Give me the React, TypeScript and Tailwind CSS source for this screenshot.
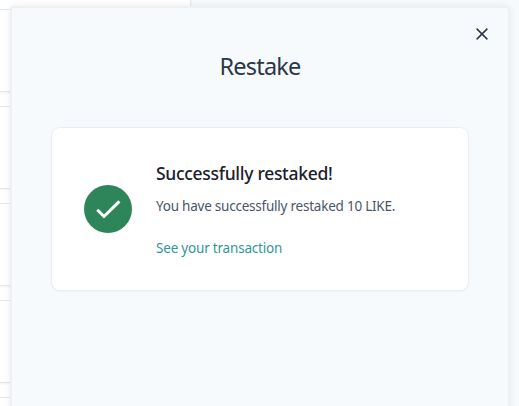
import React from "react";

function Backdrop() {
  return (
    <div className="h-[406px] w-[191px] border-r border-[#e2e8f0] bg-white pt-[9px] shadow-[1px_0_2px_rgba(0,0,0,0.03)]">
      {[0, 1, 2, 3, 4].map((i) => (
        <div key={i} className="mb-[14px] h-[83px] w-10 border-y border-[#e2e8f0] shadow-[0_1px_2px_rgba(0,0,0,0.05)]" />
      ))}
    </div>
  );
}

function SuccessCard() {
  return (
    <section className="flex h-[162px] items-center rounded-lg bg-white pl-8 shadow-[0_0_0_1px_#e8eef5,0_1px_3px_rgba(0,0,0,0.06)]">
      <svg className="size-12 shrink-0" viewBox="0 0 48 48">
        <circle cx="24" cy="24" r="24" fill="#2f855a" />
        <path d="M13.2 24.7l6.8 6.8L35.4 16.4" fill="none" stroke="white" strokeWidth="3" />
      </svg>
      <div className="ml-6 pt-px whitespace-nowrap">
        <h2 className="w-fit text-[17.5px] leading-6 font-medium tracking-[-0.3px] text-[#1a202c]">Successfully restaked!</h2>
        <p className="mt-[11px] w-fit text-[13.5px] leading-5 tracking-[-0.23px] text-[#4a5568]">You have successfully restaked 10 LIKE.</p>
        <a className="mt-[22px] block w-fit text-[13.5px] leading-5 tracking-[-0.2px] text-[#319795]">See your transaction</a>
      </div>
    </section>
  );
}

export default function App() {
  return (
    <main className="relative h-[406px] w-[519px] overflow-hidden bg-[#f6fafd] font-['Noto_Sans',sans-serif]">
      <Backdrop />
      <div role="dialog" className="absolute top-2 left-3 h-[440px] w-[496px] rounded-xs bg-[#f6fafd] px-10 shadow-[0_0_0_2px_#edf1f4,0_0_10px_rgba(0,0,0,0.12)]">
        <button className="absolute top-5 right-5 size-3" aria-label="Close">
          <svg className="size-3" viewBox="0 0 12 12" fill="none" stroke="#2d3748" strokeWidth="1.5">
            <path d="M.6.6l10.8 10.8M11.4.6L.6 11.4" />
          </svg>
        </button>
        <h1 className="pt-[42px] text-center text-[23.5px] leading-8 font-normal tracking-[-0.8px] text-[#2d3748]">Restake</h1>
        <div className="pt-[46px]">
          <SuccessCard />
        </div>
      </div>
    </main>
  );
}
